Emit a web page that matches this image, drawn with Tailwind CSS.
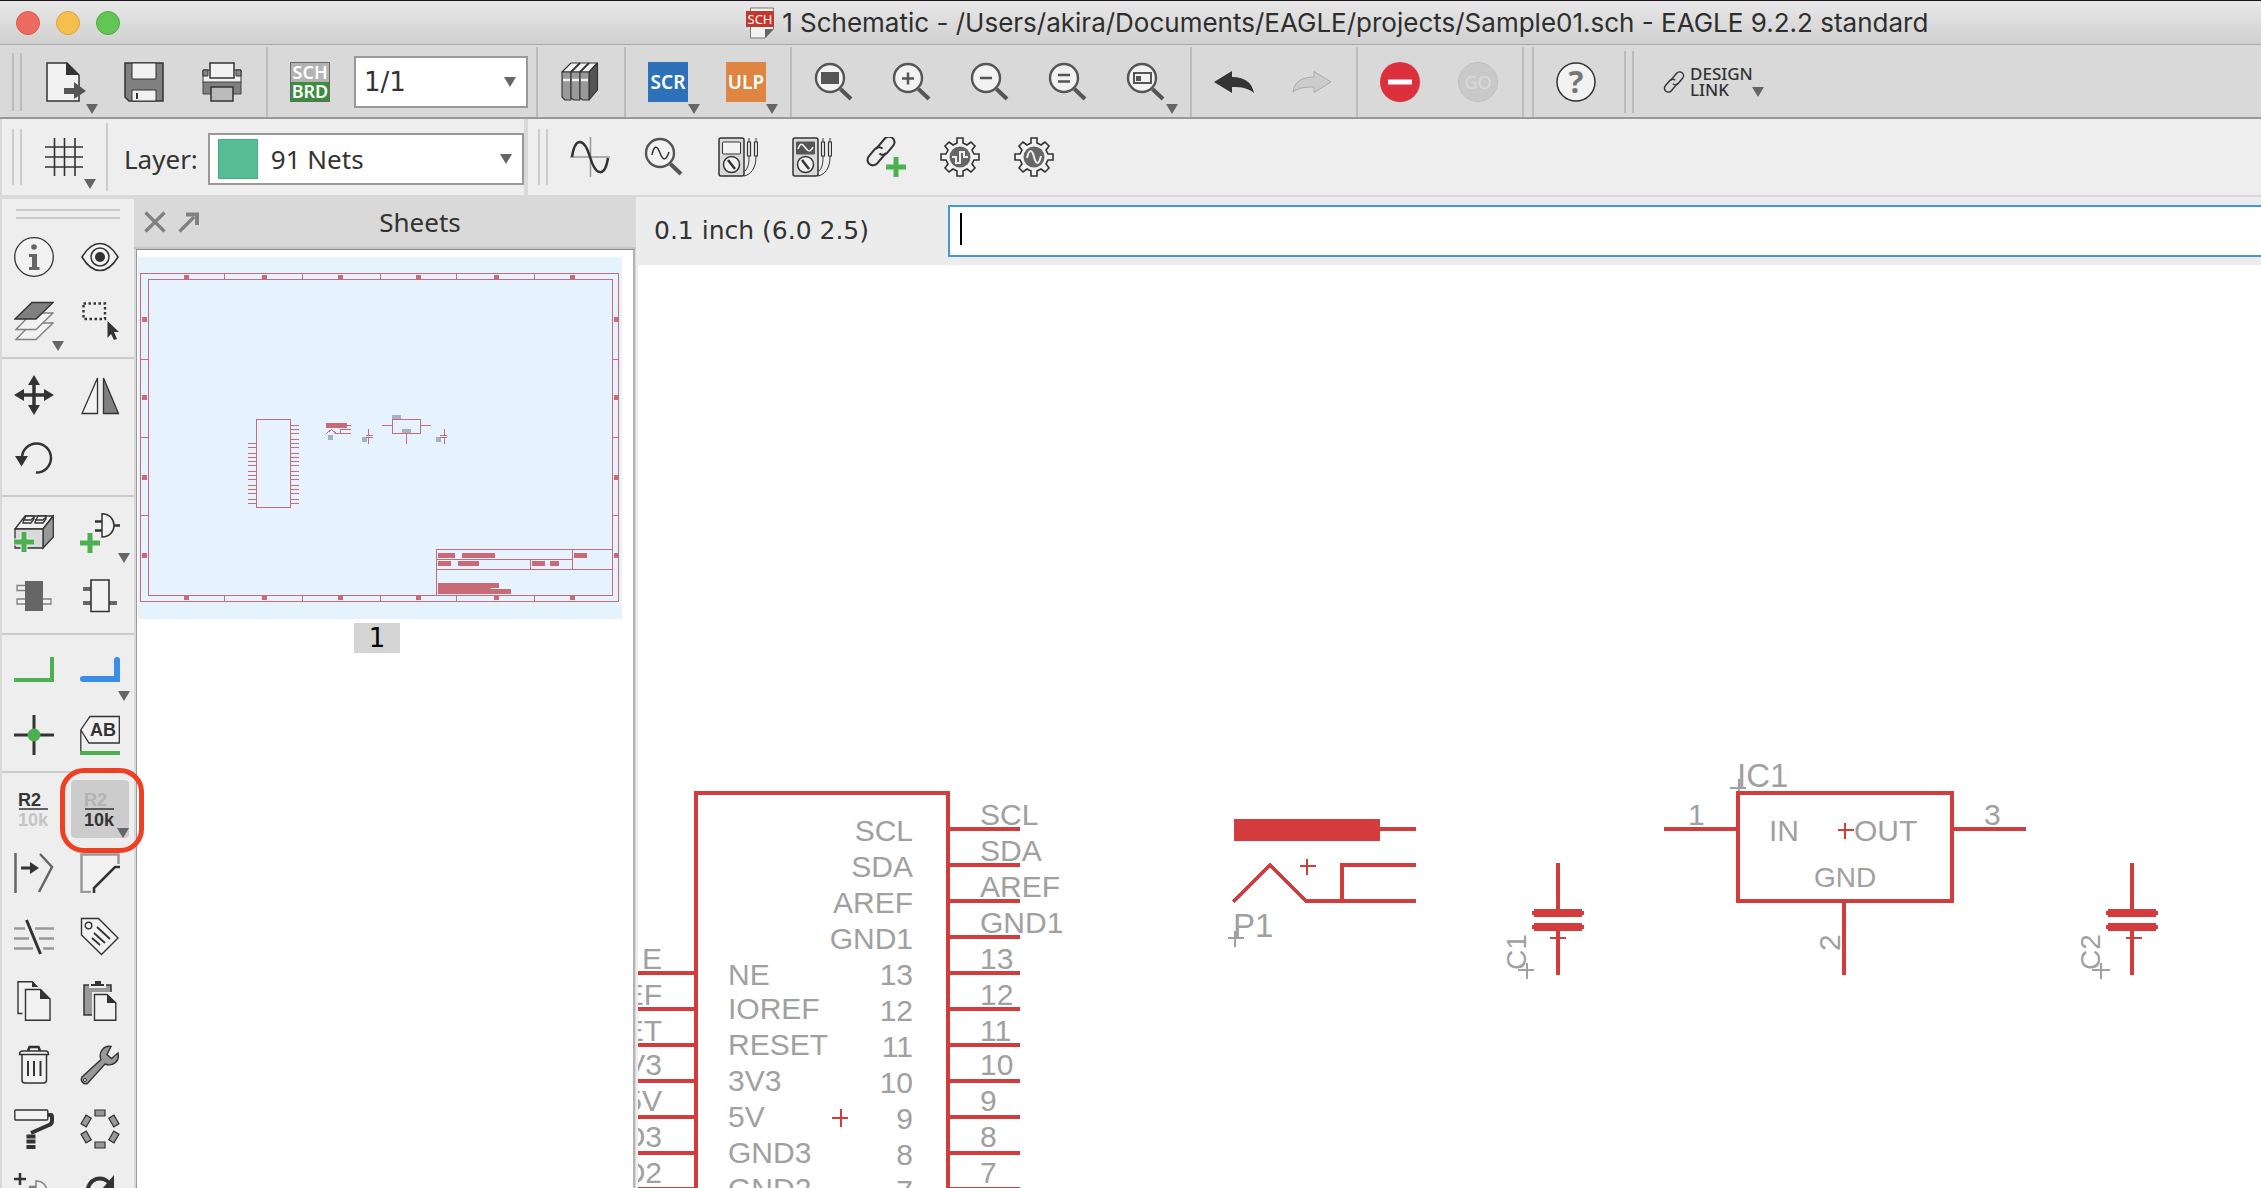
<!DOCTYPE html>
<html lang="en">
<head>
<meta charset="utf-8">
<title>1 Schematic - EAGLE 9.2.2 standard</title>
<script src="https://cdn.jsdelivr.net/npm/@tailwindcss/browser@4"></script>
</head>
<body class="h-screen overflow-hidden bg-[#d9d9d9] font-['Noto_Sans',sans-serif] text-[26px] text-[#333]">
<svg class="hidden" aria-hidden="true">
  <symbol id="down" viewBox="0 0 12 10"><path d="M0 0H12L6 10Z" fill="#666"/></symbol>
  <symbol id="lens" viewBox="0 0 40 40"><circle cx="16" cy="16" r="14" fill="#f2f2f2" stroke="#555" stroke-width="2.4"/><path d="M26.500 27L37 37" stroke="#555" stroke-width="4"/></symbol>
  <symbol id="chain" viewBox="0 0 40 40"><g transform="rotate(-50 20 20)" fill="none" stroke="currentColor" stroke-width="2.400"><path d="M22 26H6a6.500 6.500 0 0 1 0-13H17a6.500 6.500 0 0 1 6.500 6.500"/><path d="M18 14H34a6.500 6.500 0 0 1 0 13H23a6.500 6.500 0 0 1-6.500-6.500"/></g></symbol>
  <symbol id="meter" viewBox="0 0 40 40"><rect x="1" y="1" width="25" height="38" rx="2" fill="#d9d9d9" stroke="#333" stroke-width="1.500"/><circle cx="13.500" cy="27.500" r="8" fill="#f2f2f2" stroke="#333" stroke-width="1.500"/><path d="M10 23L17 32" stroke="#333" stroke-width="2.500"/><path d="M26 39C32 38 38 32 38 20V1M27 34C30 31 31 27 31 20V1" fill="none" stroke="#333" stroke-width="1"/><path d="M29.500 5h3v14h-3zM36.500 5h3v14h-3z" fill="#eee" stroke="#333" stroke-width="1.200"/></symbol>
  <symbol id="gear" viewBox="0 0 40 40"><path d="M17 1H23V6L27 8L31 5L35 9L32 13L34 17H39V23H34L32 27L35 31L31 35L27 32L23 34V39H17V34L13 32L9 35L5 31L8 27L6 23H1V17H6L8 13L5 9L9 5L13 8L17 6Z" fill="#f2f2f2" stroke="#333" stroke-width="1.600"/><circle cx="20" cy="20" r="10.500" fill="#666"/></symbol>
</svg>
<div class="flex h-full flex-col">
  <header class="flex h-[45px] shrink-0 items-center border-t border-b border-t-[#1a1218] border-b-[#aaa] bg-linear-to-b from-[#e8e8e8] to-[#d0d0d0]">
    <div class="flex w-[33%] shrink-0 gap-4 pl-4">
      <button aria-label="Close" class="size-6 rounded-full border border-[#d9564b] bg-[#ed6b60]"></button>
      <button aria-label="Minimize" class="size-6 rounded-full border border-[#dea03a] bg-[#f5bf4f]"></button>
      <button aria-label="Zoom" class="size-6 rounded-full border border-[#51a73e] bg-[#62c655]"></button>
    </div>
    <div class="flex items-center gap-2">
      <svg class="h-8 w-7" viewBox="0 0 28 32"><path d="M4.500 1H27.500V22L19 31H4.500Z" fill="#f2f2f2" stroke="#777"/><path d="M19 31V22H27.500Z" fill="#666"/><path d="M0 4H28V20H0Z" fill="#c5362c"/><text x="14" y="17" text-anchor="middle" font-family="Noto Sans,sans-serif" font-size="13" fill="#fff">SCH</text></svg>
      <h1 class="font-['Inter',sans-serif] text-[26px] leading-8 whitespace-nowrap text-[#2e2e2e]">1 Schematic - /Users/akira/Documents/EAGLE/projects/Sample01.sch - EAGLE 9.2.2 standard</h1>
    </div>
  </header>

  <div class="flex h-[74px] shrink-0 items-stretch border-b-2 border-[#999] pt-0.5">
    <div class="my-1.5 ml-3 w-2.5 border-x-2 border-[#bbb]"></div>
    <div class="flex items-center gap-[38px] border-r-2 border-[#bbb] pr-6 pl-6">
      <button aria-label="Open" class="relative size-10"><svg class="size-10" viewBox="0 0 40 40"><path d="M1 1H21L33 13V39H1Z" fill="#f2f2f2" stroke="#333" stroke-width="1.500"/><path d="M20 0L33 13H20Z" fill="#333"/><path d="M18 26H28V20L40 29L28 37V32H18Z" fill="#555"/></svg><svg class="absolute top-[42px] left-10 h-2.5 w-3"><use href="#down"/></svg></button>
      <button aria-label="Save" class="size-10"><svg class="size-10" viewBox="0 0 40 40"><path d="M1 1H39V39H5L1 35Z" fill="#808080" stroke="#333" stroke-width="1.500"/><path d="M8 1H32V17H8ZM8 28H32V39H8Z" fill="#f2f2f2" stroke="#333"/><path d="M13 31V37" stroke="#333" stroke-width="2"/></svg></button>
      <button aria-label="Print" class="size-10"><svg class="size-10" viewBox="0 0 40 40"><path d="M1 8H39V21H1Z" fill="#f2f2f2" stroke="#333"/><path d="M1 20H39V32H1Z" fill="#808080" stroke="#444"/><path d="M1 8H6V14H1ZM34 8H39V14H34Z" fill="#888" stroke="#333"/><path d="M8 1H32V16H8Z" fill="#f2f2f2" stroke="#333" stroke-width="1.500"/><path d="M9 25H31V39H9Z" fill="#bbb" stroke="#333" stroke-width="1.500"/></svg></button>
    </div>
    <div class="flex items-center gap-6 border-r-2 border-[#bbb] pr-2 pl-[22px]">
      <button aria-label="Board" class="size-10"><svg class="size-10 overflow-visible" viewBox="0 0 40 40"><path d="M0 0H40V20H0Z" fill="#b3b3b3"/><path d="M0 20H40V40H0Z" fill="#388e3c"/><path d="M.5.5H39.500V39.500H.5Z" fill="none" stroke="#666"/><g font-family="Noto Sans,sans-serif" font-size="18" font-weight="600" fill="#fff" text-anchor="middle"><text x="20" y="17">SCH</text><text x="20" y="36">BRD</text></g></svg></button>
      <div class="relative font-['DejaVu_Sans',sans-serif]">
        <select aria-label="Sheet" class="block h-[52px] w-[174px] appearance-none border-2 border-[#999] bg-white pl-2"><option>1/1</option></select>
        <svg class="pointer-events-none absolute top-[21px] right-3 h-2.5 w-3"><use href="#down"/></svg>
      </div>
    </div>
    <div class="flex items-center border-r-2 border-[#bbb] pr-6 pl-[22px]">
      <button aria-label="Library" class="size-10"><svg class="size-10" viewBox="0 0 40 40" stroke="#333" stroke-width="1.100" stroke-linejoin="round"><path d="M2 10L11 1H37L29 10Z" fill="#f2f2f2"/><path d="M29 10L37.500 1V28L29 38Z" fill="#555"/><path d="M2 10H11V38H5L2 35Z" fill="#999"/><path d="M11 10H20V38H14L11 36Z" fill="#999"/><path d="M20 10H29V38H23L20 36Z" fill="#999"/><path d="M11 10L20 1M20 10L29 1" fill="none" stroke-width="1.800"/><path d="M3 18H28" stroke="#eee" stroke-width="2.500" stroke-dasharray="7 2"/></svg></button>
    </div>
    <div class="flex items-center gap-[38px] border-r-2 border-[#bbb] pr-6 pl-[22px]">
      <button aria-label="Run script" class="relative size-10"><svg class="size-10" viewBox="0 0 40 40"><path d="M0 0H40V40H0Z" fill="#2d72b8"/><text x="20" y="27" text-anchor="middle" font-family="Noto Sans,sans-serif" font-size="19" font-weight="600" fill="#fff">SCR</text></svg><svg class="absolute top-[42px] left-10 h-2.5 w-3"><use href="#down"/></svg></button>
      <button aria-label="Run ULP" class="relative size-10"><svg class="size-10" viewBox="0 0 40 40"><path d="M0 0H40V40H0Z" fill="#dd8541"/><text x="20" y="27" text-anchor="middle" font-family="Noto Sans,sans-serif" font-size="19" font-weight="600" fill="#fff">ULP</text></svg><svg class="absolute top-[42px] left-10 h-2.5 w-3"><use href="#down"/></svg></button>
    </div>
    <div class="flex items-center gap-[38px] border-r-2 border-[#bbb] pr-6 pl-[22px]">
      <button aria-label="Zoom to fit" class="size-10"><svg class="size-10" viewBox="0 0 40 40"><use href="#lens"/><path d="M7 10H25V22H7Z" fill="#555"/></svg></button>
      <button aria-label="Zoom in" class="size-10"><svg class="size-10" viewBox="0 0 40 40"><use href="#lens"/><path d="M10 16.500H22M16 10.500V22.500" stroke="#555" stroke-width="2.500"/></svg></button>
      <button aria-label="Zoom out" class="size-10"><svg class="size-10" viewBox="0 0 40 40"><use href="#lens"/><path d="M10 16H22" stroke="#555" stroke-width="2.500"/></svg></button>
      <button aria-label="Redraw" class="size-10"><svg class="size-10" viewBox="0 0 40 40"><use href="#lens"/><path d="M10 13H22M10 19.500H22" stroke="#555" stroke-width="2.500"/></svg></button>
      <button aria-label="Zoom select" class="relative size-10"><svg class="size-10" viewBox="0 0 40 40"><use href="#lens"/><path d="M8 11H25V21H8Z" fill="none" stroke="#555" stroke-width="2"/><path d="M10 14H15V19H10Z" fill="#555"/></svg><svg class="absolute top-[42px] left-10 h-2.5 w-3"><use href="#down"/></svg></button>
    </div>
    <div class="flex items-center gap-[38px] border-r-2 border-[#bbb] pr-6 pl-[22px]">
      <button aria-label="Undo" class="size-10"><svg class="size-10" viewBox="0 0 40 40"><path d="M0 20L18 9V15C30 15 38 20 40 31C34 26 28 25 18 25V31Z" fill="#333"/></svg></button>
      <button aria-label="Redo" class="size-10"><svg class="size-10" viewBox="0 0 40 40"><path d="M39 20L22 9.500V15C10 15 2 20 1 30C6 26 12 25 22 25V30.500Z" fill="#ccc" stroke="#aaa"/></svg></button>
    </div>
    <div class="flex items-center gap-[38px] border-r-2 border-[#bbb] pr-6 pl-[22px]">
      <button aria-label="Stop" class="size-10"><svg class="size-10" viewBox="0 0 40 40"><circle cx="20" cy="20" r="20" fill="#dc303e"/><path d="M8 17.500H32V22.500H8Z" fill="#fff"/></svg></button>
      <button aria-label="Go" class="size-10"><svg class="size-10" viewBox="0 0 40 40"><circle cx="20" cy="20" r="19.500" fill="#c9c9c9" stroke="#c0c0c0"/><text x="20" y="27" text-anchor="middle" font-family="Noto Sans,sans-serif" font-size="18" fill="#dadada">GO</text></svg></button>
    </div>
    <div class="w-2.5 border-r-2 border-[#bbb]"></div>
    <div class="flex items-center pr-7 pl-[22px]">
      <button aria-label="Help" class="size-10"><svg class="size-10 overflow-visible" viewBox="0 0 40 40"><circle cx="20" cy="20" r="19" fill="#f2f2f2" stroke="#333" stroke-width="1.500"/><text x="20" y="31" text-anchor="middle" font-family="Noto Sans,sans-serif" font-size="31" font-weight="700" fill="#777">?</text></svg></button>
    </div>
    <div class="my-1 w-2.5 border-x-2 border-[#bbb]"></div>
    <button class="relative flex items-center gap-1 pl-7 text-left text-[17px] leading-4 font-medium"><svg class="size-6"><use href="#chain"/></svg><span>DESIGN<br>LINK</span><svg class="absolute top-10 left-[118px] h-2.5 w-3"><use href="#down"/></svg></button>
  </div>

  <div class="flex h-[78px] shrink-0 items-stretch border-b-2 border-l-2 border-[#d9d9d9] bg-[#eee]">
    <div class="my-2.5 ml-2.5 w-2.5 border-x-2 border-[#ccc]"></div>
    <div class="my-1 flex items-center border-r-2 border-[#ccc] pr-[22px] pl-[22px]">
      <button aria-label="Grid" class="relative size-10"><svg class="size-10" viewBox="0 0 40 40"><path d="M1 10H39M1 20H39M1 30H39M10.500 1V39M20.500 1V39M31 1V39" stroke="#333" stroke-width="1.600"/></svg><svg class="absolute top-[42px] left-10 h-2.5 w-3"><use href="#down"/></svg></button>
    </div>
    <div class="flex items-center gap-2.5 border-r-4 border-[#d9d9d9] pt-1 pl-4">
      <label for="layer">Layer:</label>
      <div class="relative">
        <select id="layer" class="block h-[52px] w-[316px] appearance-none border-2 border-[#999] bg-white pl-[61px]"><option>91 Nets</option></select>
        <span class="pointer-events-none absolute top-1.5 left-2.5 size-10 border border-[#4cad82] bg-[#56bd94]"></span>
        <svg class="pointer-events-none absolute top-[21px] right-3 h-2.5 w-3"><use href="#down"/></svg>
      </div>
    </div>
    <div class="my-2.5 ml-2.5 w-2.5 border-x-2 border-[#ccc]"></div>
    <div class="flex items-center gap-[34px] pl-[22px]">
      <button aria-label="Simulate" class="size-10"><svg class="size-10" viewBox="0 0 40 40" fill="none"><path d="M0 20H40M20.500 0V40" stroke="#999" stroke-width="1.500"/><path d="M2 20C5 0 14 0 20 20S35 40 38 21" stroke="#333" stroke-width="2.500"/></svg></button>
      <button aria-label="Probe" class="size-10"><svg class="size-10" viewBox="0 0 40 40"><use href="#lens"/><path d="M8 18C10 8 13 8 16 16S22 24 25 15" fill="none" stroke="#333" stroke-width="1.500"/></svg></button>
      <button aria-label="Voltage probe" class="size-10"><svg class="size-10" viewBox="0 0 40 40"><use href="#meter"/><rect x="4.500" y="5" width="18" height="12" rx="1" fill="#f2f2f2" stroke="#333"/></svg></button>
      <button aria-label="Phase probe" class="size-10"><svg class="size-10" viewBox="0 0 40 40"><use href="#meter"/><rect x="4" y="4.500" width="19" height="13" rx="1" fill="#555"/><path d="M6 12C9 4 11 8 13.500 11S18 16 21 10" fill="none" stroke="#fff" stroke-width="1.500"/></svg></button>
      <button aria-label="Add model" class="size-10 text-[#333]"><svg class="size-10" viewBox="0 0 40 40"><svg x="-2" y="-3" width="34" height="34"><use href="#chain"/></svg><path d="M20 30H40M30 20V40" stroke="#4caf50" stroke-width="5"/></svg></button>
      <button aria-label="Digital setup" class="size-10"><svg class="size-10" viewBox="0 0 40 40"><use href="#gear"/><path d="M12 20H16V26H20V15H24V20H28" fill="none" stroke="#eee" stroke-width="2"/></svg></button>
      <button aria-label="Analog setup" class="size-10"><svg class="size-10" viewBox="0 0 40 40"><use href="#gear"/><path d="M13 21C15 12 18 12 20 20S25 28 27 19" fill="none" stroke="#eee" stroke-width="2"/></svg></button>
    </div>
  </div>

  <div class="flex min-h-0 flex-1">
    <aside class="mt-0.5 ml-0.5 w-[132px] shrink-0 bg-[#eee]" aria-label="Tools">
      <div class="mx-3.5 mt-2.5 mb-1.5 h-2.5 border-y-2 border-[#ccc]"></div>
      <div class="grid auto-rows-[64px] grid-cols-[64px_68px] place-items-center">
        <button aria-label="Info" class="size-10"><svg class="size-10" viewBox="0 0 40 40"><circle cx="20" cy="20" r="19.300" fill="#f2f2f2" stroke="#333" stroke-width="1.300"/><circle cx="20" cy="10" r="2.800" fill="#666"/><path d="M15 17H23V30H25.500V33H15V30H18V20H15Z" fill="#666"/></svg></button>
        <button aria-label="Show" class="size-10"><svg class="size-10" viewBox="0 0 40 40"><path d="M2 20C8 10 14 6.500 20 6.500S32 10 38 20C32 30 26 33.500 20 33.500S8 30 2 20Z" fill="#f2f2f2" stroke="#333" stroke-width="1.600"/><circle cx="20" cy="20" r="9" fill="none" stroke="#333" stroke-width="1.500"/><circle cx="20" cy="20" r="5" fill="#333"/></svg></button>
        <button aria-label="Layers" class="relative size-10"><svg class="size-10" viewBox="0 0 40 40" stroke="#808080" stroke-width="1.400" fill="#f2f2f2"><path d="M2 38.500L18 22H39L22 38.500Z"/><path d="M2 28.500L18 12H39L22 28.500Z"/><path d="M1 18L18 1.500H39L22 18Z" fill="#808080" stroke="#333"/></svg><svg class="absolute top-10 left-[38px] h-2.5 w-3"><use href="#down"/></svg></button>
        <button aria-label="Group" class="size-10"><svg class="size-10" viewBox="0 0 40 40"><path d="M3.500 2.500H25V18H3.500Z" fill="none" stroke="#333" stroke-width="2.400" stroke-dasharray="2.500 2.500"/><path d="M27.500 20V37L31 33L34 39L37 38L34 31H39Z" fill="#333"/></svg></button>
      </div>
      <hr class="my-1 h-0.5 border-0 bg-[#ccc]">
      <div class="grid auto-rows-[64px] grid-cols-[64px_68px] place-items-center">
        <button aria-label="Move" class="size-10"><svg class="size-10" viewBox="0 0 40 40"><path d="M5 20H35M20 5V35" stroke="#333" stroke-width="3.500"/><path d="M20 0L26 10H14ZM20 40L26 30H14ZM0 20L10 14V26ZM40 20L30 14V26Z" fill="#333"/></svg></button>
        <button aria-label="Mirror" class="size-10"><svg class="size-10" viewBox="0 0 40 40" stroke="#333" stroke-width="1.300"><path d="M17.500 3V38.500H2Z" fill="#f2f2f2"/><path d="M23.500 3V38.500H38.500Z" fill="#808080"/></svg></button>
        <button aria-label="Rotate" class="size-10"><svg class="size-10" viewBox="0 0 40 40"><path d="M8 19A14.500 14.500 0 1 1 22 33.500" fill="none" stroke="#333" stroke-width="2.500"/><path d="M1 17H14L7.500 27.500Z" fill="#333"/></svg></button>
      </div>
      <hr class="my-1 h-0.5 border-0 bg-[#ccc]">
      <div class="grid auto-rows-[64px] grid-cols-[64px_68px] place-items-center">
        <button aria-label="Add part" class="size-10"><svg class="size-10" viewBox="0 0 40 40" stroke="#333" stroke-width="1.300"><path d="M1 16L11 3H39L29 16Z" fill="#f2f2f2"/><path d="M29 16L39.300 3V24L29 35Z" fill="#999"/><path d="M1 16H29V35H1Z" fill="#d9d9d9"/><path d="M9 9L12 3H20V6L17 10H9ZM21 9L24 3H32V6L29 10H21ZM9 7H17L20 4M21 7H29L32 4" fill="#eee"/><path d="M0 29H20M10 19V39" stroke="#eee" stroke-width="7"/><path d="M0 29H20M10 19V39" stroke="#4caf50" stroke-width="5"/></svg></button>
        <button aria-label="Add gate" class="relative size-10"><svg class="size-10" viewBox="0 0 40 40"><path d="M15 8.500H22M15 17.500H22M34 12.500H40" stroke="#333" stroke-width="2.500"/><path d="M22 .8C30 .8 34 7 34 12.500S30 24 22 24Z" fill="#f2f2f2" stroke="#333" stroke-width="1.500"/><path d="M0 30H20M10 20V40" stroke="#4caf50" stroke-width="5"/></svg><svg class="absolute top-10 left-[38px] h-2.5 w-3"><use href="#down"/></svg></button>
        <button aria-label="Replace part" class="size-10"><svg class="size-10" viewBox="0 0 40 40"><path d="M3 8.500H12V13.500H3ZM3 22H12V27H3ZM28 22H37V27H28Z" fill="#f2f2f2" stroke="#808080" stroke-width="1.300"/><path d="M11 4H29V34H11Z" fill="#666"/></svg></button>
        <button aria-label="Replace gate" class="size-10"><svg class="size-10" viewBox="0 0 40 40"><path d="M3 12H11M3 26H11M29 26H37" stroke="#666" stroke-width="4"/><path d="M11 3H29V34.500H11Z" fill="#f2f2f2" stroke="#333" stroke-width="1.600"/></svg></button>
      </div>
      <hr class="my-1 h-0.5 border-0 bg-[#ccc]">
      <div class="grid auto-rows-[64px] grid-cols-[64px_68px] place-items-center">
        <button aria-label="Net" class="size-10"><svg class="size-10" viewBox="0 0 40 40"><path d="M0 29H38V6" fill="none" stroke="#4caf50" stroke-width="4"/></svg></button>
        <button aria-label="Bus" class="relative size-10"><svg class="size-10" viewBox="0 0 40 40"><path d="M3 28H37V9" fill="none" stroke="#3b8ee8" stroke-width="6" stroke-linecap="round"/></svg><svg class="absolute top-10 left-[38px] h-2.5 w-3"><use href="#down"/></svg></button>
        <button aria-label="Junction" class="size-10"><svg class="size-10" viewBox="0 0 40 40"><path d="M0 20H40M20 0V40" stroke="#333" stroke-width="3"/><circle cx="20" cy="20" r="6.500" fill="#4caf50"/></svg></button>
        <button aria-label="Label" class="size-10"><svg class="size-10" viewBox="0 0 40 40"><path d="M.8 37V15L10 1.500H39.300V28H9L.8 15" fill="#f2f2f2" stroke="#333" stroke-width="1.300"/><path d="M0 38H40" stroke="#4caf50" stroke-width="4"/><text x="23" y="21" text-anchor="middle" font-family="Liberation Sans,sans-serif" font-size="18" font-weight="700" fill="#333">AB</text></svg></button>
      </div>
      <hr class="my-1 h-0.5 border-0 bg-[#ccc]">
      <div class="grid auto-rows-[64px] grid-cols-[64px_68px] place-items-center">
        <button aria-label="Name" class="size-10"><svg class="size-10 overflow-visible" viewBox="0 0 40 40" font-family="Liberation Sans,sans-serif" font-size="18" font-weight="700"><text x="4" y="17" fill="#333">R2</text><text x="4" y="37" fill="#c4c4c4">10k</text><path d="M5 20H34" stroke="#333" stroke-width="1.500"/></svg></button>
        <button aria-label="Value" class="relative flex size-[58px] items-center justify-center rounded bg-[#ccc]"><svg class="size-10 overflow-visible" viewBox="0 0 40 40" font-family="Liberation Sans,sans-serif" font-size="18" font-weight="700"><text x="4" y="17" fill="#b3b3b3">R2</text><text x="4" y="37" fill="#333">10k</text><path d="M5 20H34" stroke="#333" stroke-width="1.500"/></svg><svg class="absolute right-0 bottom-0 h-2.5 w-3"><use href="#down"/></svg><span class="absolute -top-3 -left-[11px] h-[85px] w-[84px] rounded-3xl border-[5px] border-[#f04023]"></span></button>
        <button aria-label="Miter" class="size-10"><svg class="size-10" viewBox="0 0 40 40" fill="none" stroke="#666"><path d="M1.500 0V40M26 1L38 14L25 39" stroke-width="2.500"/><path d="M7 15H18" stroke="#333" stroke-width="3"/><path d="M16 9L25 15L16 21Z" fill="#333" stroke="none"/></svg></button>
        <button aria-label="Bend" class="size-10"><svg class="size-10" viewBox="0 0 40 40"><path d="M1 1H39V14H35L14 35V39H1Z" fill="#f2f2f2"/><path d="M11 39H1.500V1.500H38.500V11" fill="none" stroke="#999" stroke-width="2.500"/><path d="M14 40V35L35 14H40" fill="none" stroke="#333" stroke-width="2.600"/></svg></button>
        <button aria-label="Split" class="size-10"><svg class="size-10" viewBox="0 0 40 40"><path d="M0 11.500H11M21 11.500H40M0 21.500H15M25 21.500H40M0 31.500H19M29 31.500H40" stroke="#999" stroke-width="2.500"/><path d="M12.500 3L26.500 37" stroke="#333" stroke-width="3"/></svg></button>
        <button aria-label="Attribute" class="size-10"><svg class="size-10" viewBox="0 0 40 40" stroke="#333" stroke-width="1.400"><path d="M1.500 1.500H18.500L38 21L21.500 37.500L1.500 18Z" fill="#f2f2f2"/><circle cx="8.500" cy="8.500" r="3.300" fill="none"/><path d="M17 10L30 22M14 16L25 26M12 21L20 28" stroke-width="1.800"/></svg></button>
        <button aria-label="Copy" class="size-10"><svg class="size-10" viewBox="0 0 40 40"><path d="M4 .8H18L24 7V32.500H4Z" fill="#f2f2f2" stroke="#333" stroke-width="1.400"/><path d="M18 0L25 7H18Z" fill="#333"/><path d="M10 7.500H26.500L37 18V40H10Z" fill="#f2f2f2" stroke="#eee" stroke-width="3"/><path d="M11.500 8.500H26.500L36 18V39.300H11.500Z" fill="#f2f2f2" stroke="#333" stroke-width="1.400"/><path d="M26 8L36.500 18H26Z" fill="#333"/></svg></button>
        <button aria-label="Paste" class="size-10"><svg class="size-10" viewBox="0 0 40 40"><path d="M4 4H31V34H4Z" fill="#999" stroke="#333" stroke-width="1.500"/><path d="M9 2H26V7H9Z" fill="#eee"/><path d="M11 3H15V0H21V3H24V5H11Z" fill="#333"/><path d="M12 11H32V20L37 21V41H12Z" fill="#eee"/><path d="M14.500 13.500H27L35.800 22V39.300H14.500Z" fill="#f2f2f2" stroke="#333" stroke-width="1.400"/><path d="M27 13L36.500 22H27Z" fill="#333"/></svg></button>
        <button aria-label="Delete" class="size-10"><svg class="size-10" viewBox="0 0 40 40" stroke="#333" stroke-width="1.500"><path d="M14 6L15.500 2H24.500L26 6" fill="none" stroke-width="2.500"/><path d="M8 9H32.500V35Q32.500 38 29.500 38H11Q8 38 8 35Z" fill="#f2f2f2"/><path d="M5.500 9.500Q5.500 6 9 6H31.500Q34.500 6 34.500 9.500Z" fill="#f2f2f2"/><path d="M14 16V31M20 16V31M26.500 16V31" stroke-width="2"/></svg></button>
        <button aria-label="Change" class="size-10"><svg class="size-10" viewBox="0 0 40 40"><path d="M31 1.500C24 0 18 7 21 14.500L2 32A4.500 4.500 0 0 0 7.500 38.500L25 19C33 22 40 16 38 8L31.500 13.500L27 9.500Z" fill="#999" stroke="#333" stroke-width="1.400"/><circle cx="5" cy="35" r="1.500" fill="#eee" stroke="#333"/></svg></button>
        <button aria-label="Paint roller" class="size-10"><svg class="size-10" viewBox="0 0 40 40"><path d="M33 6H37Q38 6 38 8V12Q38 15 35 16L17 24" fill="none" stroke="#333" stroke-width="4"/><rect x=".8" y="1" width="33" height="10" rx="1" fill="#f2f2f2" stroke="#333" stroke-width="1.400"/><path d="M12.500 27.500H21.500M12.500 32.500H21.500M12.500 38H21.500" stroke="#333" stroke-width="4"/></svg></button>
        <button aria-label="Arrange" class="size-10"><svg class="size-10" viewBox="0 0 40 40" fill="#999" stroke="#333" stroke-width="1.200"><path id="seg" d="M15 1H25V7H15Z"/><use href="#seg" transform="rotate(60 20 20)"/><use href="#seg" transform="rotate(120 20 20)"/><use href="#seg" transform="rotate(180 20 20)"/><use href="#seg" transform="rotate(240 20 20)"/><use href="#seg" transform="rotate(300 20 20)"/></svg></button>
        <button aria-label="Invoke" class="size-10"><svg class="size-10" viewBox="0 0 40 40"><path d="M0 6H12M6 0V12" stroke="#333" stroke-width="2.500"/><path d="M22 8C30 8 33 14 33 19S30 31 22 31Z" fill="#f2f2f2" stroke="#808080" stroke-width="1.500"/><path d="M15 14H22M15 25H22" stroke="#808080" stroke-width="2.500"/></svg></button>
        <button aria-label="Repeat" class="size-10"><svg class="size-10" viewBox="0 0 40 40"><path d="M8 19A12 12 0 0 1 30 11" fill="none" stroke="#333" stroke-width="4"/><path d="M34 2V16H22Z" fill="#333"/></svg></button>
      </div>
    </aside>

    <section class="flex w-[502px] shrink-0 flex-col" aria-label="Sheets">
      <div class="grid h-[52px] shrink-0 grid-cols-[1fr_auto_1fr] items-center border-b-2 border-[#c8c8c8] pl-2.5">
        <div class="flex gap-3">
          <button aria-label="Close panel" class="size-[22px]"><svg class="size-[22px]" viewBox="0 0 22 22"><path d="M1.500 1.500L20.500 20.500M20.500 1.500L1.500 20.500" stroke="#808080" stroke-width="3.200"/></svg></button>
          <button aria-label="Detach panel" class="size-[22px]"><svg class="size-[22px]" viewBox="0 0 22 22"><path d="M1.500 20.500L16 6" stroke="#808080" stroke-width="3.200"/><path d="M8 3.500H19V14" fill="none" stroke="#808080" stroke-width="4"/></svg></button>
        </div>
        <h2 class="pl-[60px]">Sheets</h2>
        <div></div>
      </div>
      <div class="mr-[1px] ml-0.5 flex flex-1 flex-col items-start border-t border-r-2 border-l border-t-[#888] border-r-[#b4b4b4] border-l-[#999] bg-white pt-[7px] pl-px">
        <svg class="h-[362px] w-[484px] bg-[#e6f3ff]" viewBox="138 257 484 362" shape-rendering="crispEdges" fill="none" stroke="#c96b77">
          <path d="M140.500 273.500H618.500V601.500H140.500ZM148.500 279.500H612.500V595.500H148.500Z"/>
          <path d="M224.500 274v6M302.500 274v6M380.500 274v6M456.500 274v6M534.500 274v6M224.500 596v6M302.500 596v6M380.500 596v6M456.500 596v6M534.500 596v6M141 359.500h8M141 437.500h8M141 515.500h8M612 359.500h7M612 437.500h7M612 515.500h7"/>
          <path stroke="none" fill="#c96b77" d="M184 275h5v5h-5zM262 275h5v5h-5zM338 275h5v5h-5zM416 275h5v5h-5zM494 275h5v5h-5zM570 275h5v5h-5zM184 596h5v4h-5zM262 596h5v4h-5zM338 596h5v4h-5zM416 596h5v4h-5zM494 596h5v4h-5zM570 596h5v4h-5zM142 317h5v5h-5zM142 395h5v5h-5zM142 475h5v5h-5zM142 553h5v5h-5zM614 317h5v5h-5zM614 395h5v5h-5zM614 475h5v5h-5zM614 553h5v5h-5z"/>
          <path d="M256.500 419.500H290.500V507.500H256.500Z"/>
          <path d="M291 425.500h8M291 429.500h8M291 433.500h8M291 439.500h8M291 443.500h8M291 447.500h8M291 453.500h8M291 457.500h8M291 461.500h8M291 465.500h8M291 471.500h8M291 475.500h8M291 479.500h8M291 485.500h8M291 489.500h8M291 493.500h8M291 499.500h8M291 503.500h8M248 443.500h8M248 447.500h8M248 453.500h8M248 457.500h8M248 461.500h8M248 465.500h8M248 471.500h8M248 475.500h8M248 479.500h8M248 485.500h8M248 489.500h8M248 493.500h8M248 499.500h8M248 503.500h8"/>
          <path stroke="none" fill="#a5b3c0" d="M328 435h5v5h-5zM362 437h5v5h-5zM392 415h9v5h-9zM402 429h9v5h-9zM436 437h5v5h-5z"/>
          <path d="M326 433.500L331.500 429.500L336 433.500H351M340.500 433V429.500H351M347 425.500h4M368.500 429v6M368.500 437v7M366 435.500h7M366 437.500h7M444.500 429v6M444.500 437v7M440 435.500h7M440 437.500h7M392.500 419.500H420.500V433.500H392.500ZM382 425.500h10M421 425.500h10M406.500 434v10"/>
          <path d="M612 549.500H436.500V595M436 559.500H572M436 569.500H612M572.500 549V569M530.500 559V569"/>
          <path stroke="none" fill="#c96b77" d="M326 423h21v5h-21zM438 553h17v5h-17zM462 553h33v5h-33zM574 553h13v5h-13zM438 561h13v5h-13zM458 561h21v5h-21zM532 561h13v5h-13zM550 561h9v5h-9zM438 583h61v5h-61zM438 588h53v1h-53zM438 589h73v5h-73z"/>
        </svg>
        <div class="flex w-[484px] justify-center pt-1 pr-1.5"><span class="block h-[30px] w-[46px] bg-[#d4d4d4] text-center font-['DejaVu_Sans',sans-serif] leading-[30px] text-black">1</span></div>
      </div>
    </section>

    <main class="flex min-w-0 flex-1 flex-col border-l-2 border-[#eee] bg-white">
      <div class="flex h-[68px] shrink-0 items-center bg-[#ececec] pl-4">
        <label for="cmd" class="w-[294px] shrink-0 font-['DejaVu_Sans',sans-serif] text-[25px]">0.1 inch (6.0 2.5)</label>
        <div class="relative flex-1"><input id="cmd" type="text" class="block h-[52px] w-full border-y-2 border-l-2 border-[#4497d6] bg-white px-2.5 outline-none"><span class="absolute top-2 left-3 h-8 w-0.5 bg-black"></span></div>
      </div>
      <svg class="min-h-0 w-full flex-1 overflow-hidden" role="img" aria-label="Schematic">
        <g transform="translate(-638 -265)">
          <g font-family="Liberation Sans,sans-serif" font-size="30" fill="#a0a0a0">
            <text x="980" y="825">SCL</text><text x="980" y="861">SDA</text><text x="980" y="897">AREF</text><text x="980" y="933">GND1</text><text x="980" y="969">13</text><text x="980" y="1005">12</text><text x="980" y="1041">11</text><text x="980" y="1075">10</text><text x="980" y="1111">9</text><text x="980" y="1147">8</text><text x="980" y="1183">7</text>
            <g text-anchor="end"><text x="913" y="841">SCL</text><text x="913" y="877">SDA</text><text x="913" y="913">AREF</text><text x="913" y="949">GND1</text><text x="913" y="985">13</text><text x="913" y="1021">12</text><text x="913" y="1057">11</text><text x="913" y="1093">10</text><text x="913" y="1129">9</text><text x="913" y="1165">8</text><text x="913" y="1201">7</text>
            <text x="662" y="969">E</text><text x="662" y="1005">IOREF</text><text x="662" y="1041">RESET</text><text x="662" y="1075">3V3</text><text x="662" y="1111">5V</text><text x="662" y="1147">GND3</text><text x="662" y="1183">GND2</text></g>
            <text x="728" y="985">NE</text><text x="728" y="1019">IOREF</text><text x="728" y="1055">RESET</text><text x="728" y="1091">3V3</text><text x="728" y="1127">5V</text><text x="728" y="1163">GND3</text><text x="728" y="1199">GND2</text>
            <text x="1688" y="825">1</text><text x="1984" y="825">3</text><text x="1769" y="841">IN</text><text x="1854" y="841">OUT</text><text transform="translate(1840 951) rotate(-90)">2</text>
            <g font-size="28"><text x="1814" y="887">GND</text><text transform="translate(1526 970) rotate(-90)">C1</text><text transform="translate(2100 970) rotate(-90)">C2</text></g>
            <g font-size="33"><text x="1233" y="937">P1</text><text x="1737" y="787">IC1</text></g>
          </g>
          <g shape-rendering="crispEdges" fill="none" stroke-width="2">
            <path stroke="#a0a0a0" d="M1228 938h16M1235 931v16M1518 970h16M1527 963v16M1730 788h16M1739 779v16M2092 970h18M2101 963v16"/>
            <path stroke="#d33c3c" d="M832 1118h16M841 1109v18M1300 866h16M1307 859v16M1550 938h16M1838 830h16M1845 823v16M2126 938h16"/>
          </g>
          <g shape-rendering="crispEdges" fill="none" stroke="#d33c3c" stroke-width="4">
            <path d="M696 1400V793H948V1400"/>
            <path d="M950 829h70M950 865h70M950 901h70M950 937h70M950 973h70M950 1009h70M950 1045h70M950 1081h70M950 1117h70M950 1153h70M950 1189h70M630 973h64M630 1009h64M630 1045h64M630 1081h64M630 1117h64M630 1153h64M630 1189h64"/>
            <path d="M1380 829h36M1233 902L1270 865L1306 901H1416M1342 901V865H1416"/>
            <path fill="#d33c3c" stroke="none" d="M1234 819h146v22h-146z"/>
            <path d="M1558 863V909M1558 931V975M2132 863V909M2132 931V975"/>
            <path stroke-width="8" d="M1534 913h48M1534 927h48M2108 913h48M2108 927h48"/>
            <path d="M1532 913h52M1532 927h52M2106 913h52M2106 927h52"/>
            <path d="M1738 793H1952V901H1738ZM1664 829h72M1954 829h72M1844 903v72"/>
          </g>
        </g>
      </svg>
    </main>
  </div>
</div>
</body>
</html>
